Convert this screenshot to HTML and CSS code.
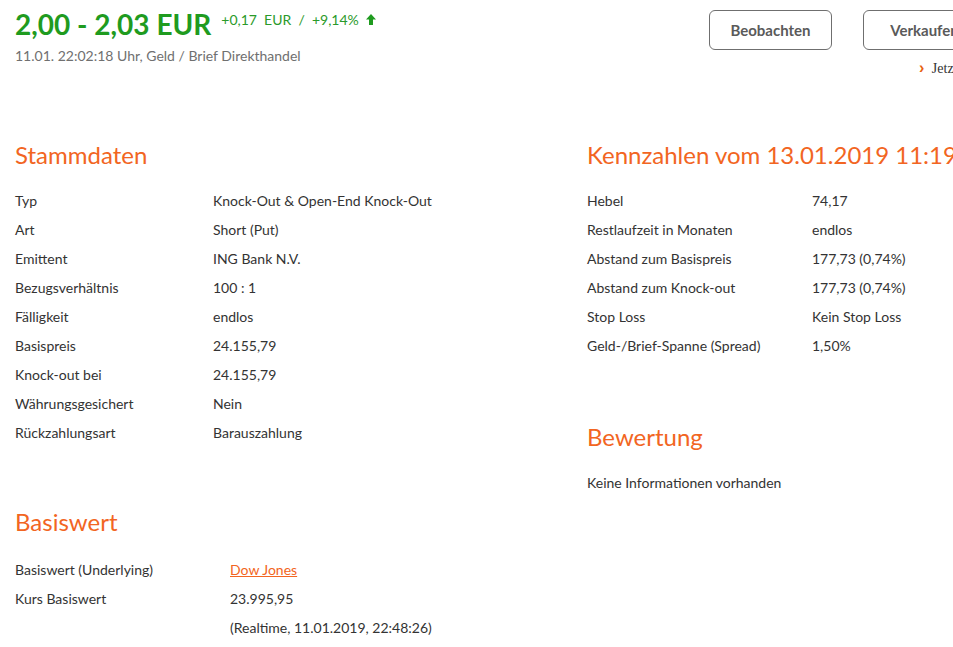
FILE: index.html
```html
<!DOCTYPE html>
<html lang="de">
<head>
<meta charset="utf-8">
<link rel="stylesheet" href="styles.css">
</head>
<body>
<div class="page">
  <header class="top">
    <div class="quote">
      <div class="price-line">
        <span class="price">2,00 - 2,03 EUR</span>
        <span class="change">+0,17&nbsp; EUR &nbsp;/&nbsp; +9,14%</span>
        <svg class="arrow" width="12" height="13" viewBox="0 0 12 13"><path d="M6 1 L11 6.5 L8 6.5 L8 12 L4 12 L4 6.5 L1 6.5 Z" fill="#1f9b1f"/></svg>
      </div>
      <div class="stamp">11.01. 22:02:18 Uhr, Geld / Brief Direkthandel</div>
    </div>
    <div class="actions">
      <div class="buttons">
        <button class="btn">Beobachten</button>
        <button class="btn">Verkaufen</button>
      </div>
      <div class="jetzt"><span class="chev">&#x203A;</span> Jetzt</div>
    </div>
  </header>

  <div class="columns">
    <div class="col left">
      <section class="block">
        <h2>Stammdaten</h2>
        <dl class="facts">
          <dt>Typ</dt><dd>Knock-Out &amp; Open-End Knock-Out</dd>
          <dt>Art</dt><dd>Short (Put)</dd>
          <dt>Emittent</dt><dd>ING Bank N.V.</dd>
          <dt>Bezugsverhältnis</dt><dd>100 : 1</dd>
          <dt>Fälligkeit</dt><dd>endlos</dd>
          <dt>Basispreis</dt><dd>24.155,79</dd>
          <dt>Knock-out bei</dt><dd>24.155,79</dd>
          <dt>Währungsgesichert</dt><dd>Nein</dd>
          <dt>Rückzahlungsart</dt><dd>Barauszahlung</dd>
        </dl>
      </section>
      <section class="block">
        <h2>Basiswert</h2>
        <dl class="facts wide">
          <dt>Basiswert (Underlying)</dt><dd><a href="#">Dow Jones</a></dd>
          <dt>Kurs Basiswert</dt><dd>23.995,95</dd>
          <dt></dt><dd>(Realtime, 11.01.2019, 22:48:26)</dd>
        </dl>
      </section>
    </div>
    <div class="col right">
      <section class="block">
        <h2>Kennzahlen vom 13.01.2019 11:19</h2>
        <dl class="facts right-facts">
          <dt>Hebel</dt><dd>74,17</dd>
          <dt>Restlaufzeit in Monaten</dt><dd>endlos</dd>
          <dt>Abstand zum Basispreis</dt><dd>177,73 (0,74%)</dd>
          <dt>Abstand zum Knock-out</dt><dd>177,73 (0,74%)</dd>
          <dt>Stop Loss</dt><dd>Kein Stop Loss</dd>
          <dt>Geld-/Brief-Spanne (Spread)</dt><dd>1,50%</dd>
        </dl>
      </section>
      <section class="block">
        <h2>Bewertung</h2>
        <p class="note">Keine Informationen vorhanden</p>
      </section>
    </div>
  </div>
</div>
</body>
</html>
```

FILE: styles.css
```css
html, body {
  margin: 0;
  padding: 0;
  background: #fff;
  overflow: hidden;
}
body {
  font-family: Lato, "Noto Sans", sans-serif;
  color: #333;
  font-size: 14px;
}
.page {
  width: 1160px;
  padding: 0 0 0 15px;
}
.top {
  display: flex;
  height: 100px;
}
.quote {
  width: 694px;
  flex-shrink: 0;
}
.price-line {
  display: flex;
  align-items: flex-start;
  margin-top: 8px;
}
.price {
  font-size: 28px;
  font-weight: 700;
  color: #1f9b1f;
  line-height: 32px;
}
.change {
  font-size: 14px;
  color: #2a9a2a;
  margin-left: 10px;
  margin-top: 3px;
}
.arrow {
  margin-left: 6px;
  margin-top: 5px;
}
.stamp {
  margin-top: 7px;
  color: #707070;
  font-size: 14px;
}
.actions {
  display: flex;
  flex-direction: column;
  align-items: flex-start;
  padding-top: 10px;
}
.buttons {
  display: flex;
  gap: 31px;
}
.btn {
  width: 123px;
  height: 40px;
  background: #fff;
  border: 1px solid #6f6f6f;
  border-radius: 6px;
  font-family: Lato, "Noto Sans", sans-serif;
  font-size: 15px;
  font-weight: 700;
  color: #5a5a5a;
  padding: 0;
}
.jetzt {
  margin-left: 210px;
  margin-top: 9px;
  font-family: "Liberation Serif", serif;
  font-size: 14px;
  color: #333;
  white-space: nowrap;
}
.chev {
  color: #e8620f;
  font-family: "Liberation Sans", sans-serif;
  font-weight: 700;
  font-size: 16px;
  margin-right: 4px;
}
.columns {
  display: flex;
  margin-top: 40px;
}
.col.left {
  width: 572px;
}
.col.right {
  width: 560px;
}
.block h2 {
  margin: 0;
  font-weight: 400;
  font-size: 24px;
  line-height: 30px;
  color: #f26522;
  white-space: nowrap;
}
.facts {
  margin: 16px 0 0 0;
  display: grid;
  grid-template-columns: 198px 1fr;
  grid-auto-rows: 29px;
  align-items: center;
}
.facts.wide {
  grid-template-columns: 215px 1fr;
  margin-top: 18px;
}
.facts.right-facts {
  grid-template-columns: 225px 1fr;
}
.facts dt, .facts dd {
  margin: 0;
  line-height: 29px;
  white-space: nowrap;
}
.facts a {
  color: #f26522;
  text-decoration: underline;
}
.left .block + .block {
  margin-top: 60px;
}
.right .block + .block {
  margin-top: 62px;
}
.note {
  margin: 16px 0 0 0;
  line-height: 29px;
}
```
